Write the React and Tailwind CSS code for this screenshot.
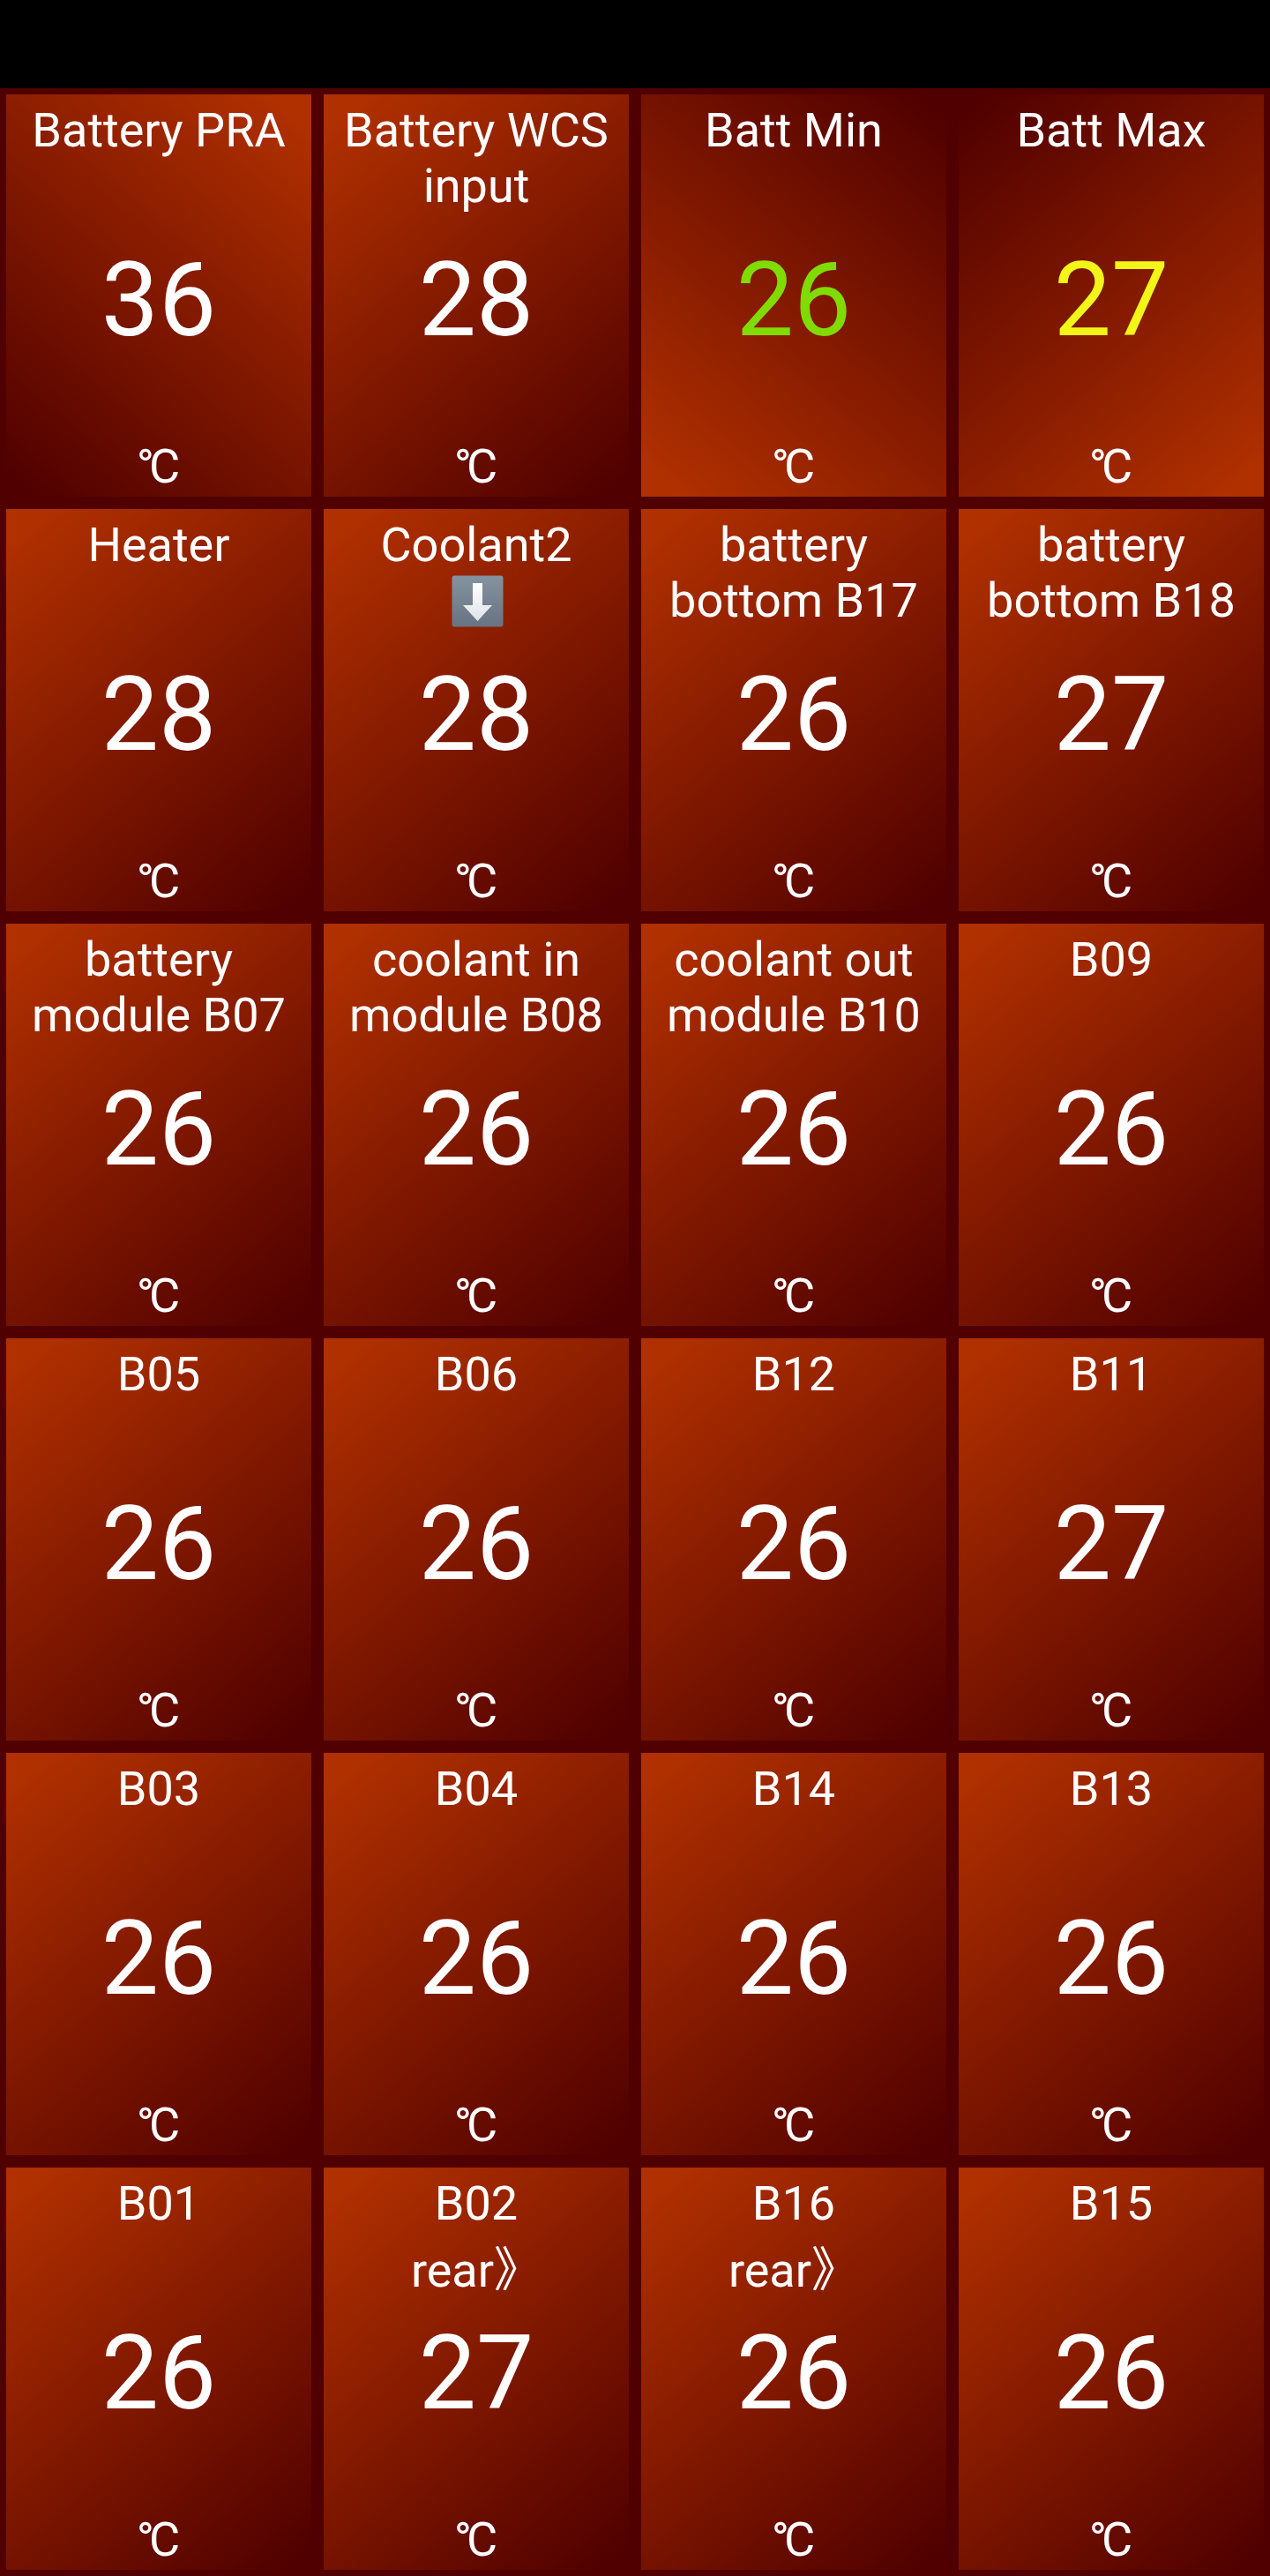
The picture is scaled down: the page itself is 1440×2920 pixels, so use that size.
const FONT = "font-['Roboto','Noto_Sans_CJK_SC',sans-serif]";

const GRADIENTS = {
  br: 'bg-[linear-gradient(140deg,#b03000_5%,#500000_97%)]',
  bl: 'bg-[linear-gradient(220deg,#b03000_5%,#500000_97%)]',
  tr: 'bg-[linear-gradient(40deg,#b03000_5%,#500000_97%)]',
  tl: 'bg-[linear-gradient(320deg,#b03000_5%,#500000_97%)]',
};

const sensors = [
  { label: 'Battery PRA', value: 36, gradient: 'bl' },
  { label: 'Battery WCS input', value: 28 },
  { label: 'Batt Min', value: 26, gradient: 'tr', color: 'text-[#80dc00]' },
  { label: 'Batt Max', value: 27, gradient: 'tl', color: 'text-[#f2f518]' },
  { label: 'Heater', value: 28 },
  { label: 'Coolant2', value: 28, arrow: true },
  { label: 'battery bottom B17', value: 26 },
  { label: 'battery bottom B18', value: 27 },
  { label: 'battery module B07', value: 26 },
  { label: 'coolant in module B08', value: 26 },
  { label: 'coolant out module B10', value: 26 },
  { label: 'B09', value: 26 },
  { label: 'B05', value: 26 },
  { label: 'B06', value: 26 },
  { label: 'B12', value: 26 },
  { label: 'B11', value: 27 },
  { label: 'B03', value: 26 },
  { label: 'B04', value: 26 },
  { label: 'B14', value: 26 },
  { label: 'B13', value: 26 },
  { label: 'B01', value: 26 },
  { label: 'B02', value: 27, note: 'rear》' },
  { label: 'B16', value: 26, note: 'rear》' },
  { label: 'B15', value: 26 },
];

function DownArrowEmoji() {
  return (
    <svg viewBox="0 0 59 59" className="ml-[145px] mt-[3px] block h-[59px] w-[59px]">
      <defs>
        <linearGradient id="arrow-box" x1="0" y1="0" x2="0" y2="1">
          <stop offset="0" stopColor="#84939f" />
          <stop offset="1" stopColor="#687384" />
        </linearGradient>
        <linearGradient id="arrow-fill" x1="0" y1="0" x2="0" y2="1">
          <stop offset="0" stopColor="#ffffff" />
          <stop offset="1" stopColor="#dfe3e8" />
        </linearGradient>
      </defs>
      <rect x="0.5" y="0.5" width="58" height="58" rx="3" fill="url(#arrow-box)" />
      <path d="M24 9h11v25h11L29.5 52 13 34h11z" fill="url(#arrow-fill)" />
    </svg>
  );
}

function SensorCard({ label, value, gradient = 'br', color = 'text-white', arrow, note }) {
  return (
    <div className={`flex flex-col items-stretch pt-[9px] text-center text-white ${GRADIENTS[gradient]}`}>
      <div className="h-[166px] text-[54px] leading-[normal]">
        <div>{label}</div>
        {note ? <div>{note}</div> : null}
        {arrow ? <DownArrowEmoji /> : null}
      </div>
      <div className={`text-[116px] leading-[116px] ${color}`}>{value}</div>
      <div className="mt-auto pb-[3px] pr-[7px] text-[54px] leading-[normal] tracking-[-6px]">°C</div>
    </div>
  );
}

export default function App() {
  return (
    <div className={`flex min-h-[2920px] w-[1440px] flex-col bg-[#500000] ${FONT}`}>
      <div className="h-[100px] bg-black" />
      <div className="grid grid-cols-4 auto-rows-[456px] gap-[14px] p-[7px]">
        {sensors.map((sensor) => (
          <SensorCard key={sensor.label} {...sensor} />
        ))}
      </div>
    </div>
  );
}
